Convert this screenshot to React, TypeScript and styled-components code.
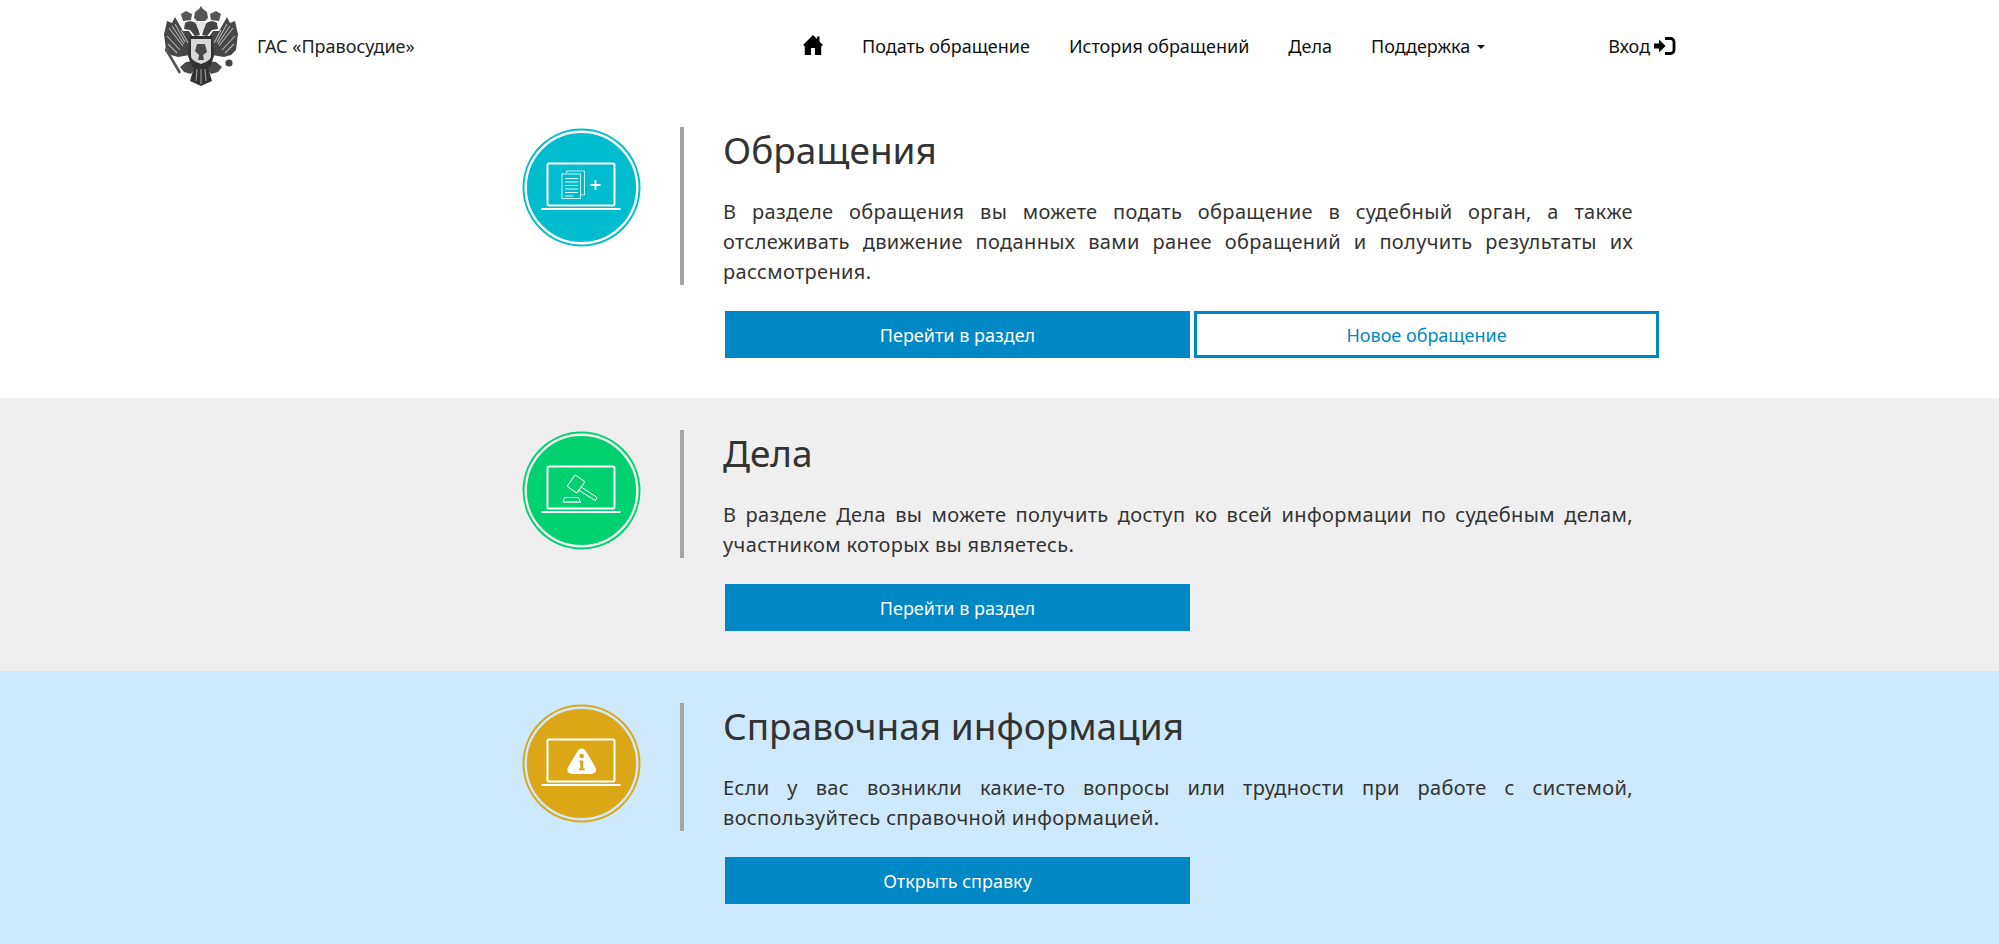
import styled, { createGlobalStyle } from "styled-components";

const GlobalStyle = createGlobalStyle`
  html, body {
    margin: 0;
    padding: 0;
    background: #fff;
  }
  body {
    font-family: "Noto Sans", "Open Sans", sans-serif;
    color: #333;
  }
`;

const Header = styled.header`
  height: 95px;
  display: flex;
  align-items: flex-start;
  padding-left: 164px;
  background: #fff;
`;
const Brand = styled.a`
  display: flex;
  align-items: center;
  gap: 19px;
  width: 639px;
  height: 91px;
  font-size: 18px;
  color: #222;
`;
const Nav = styled.nav`
  display: flex;
  align-items: center;
  gap: 39px;
  height: 91px;
  font-size: 18px;
  color: #111;
`;
const NavLink = styled.a`
  display: flex;
  align-items: center;
  gap: 7px;
  color: #111;
  white-space: nowrap;
`;
const HomeLink = styled(NavLink)`
  margin-top: -1px;
`;
const Caret = styled.span`
  width: 0;
  height: 0;
  border-left: 4px solid transparent;
  border-right: 4px solid transparent;
  border-top: 4px solid #111;
  margin-top: 3px;
`;
const Login = styled(NavLink)`
  margin-left: 84px;
  gap: 4px;
`;
const Section = styled.section<{ $bg: string }>`
  background: ${(p) => p.$bg};
  padding: 32px 0 40px 522px;
`;
const Row = styled.div`
  display: flex;
  align-items: flex-start;
`;
const IconWrap = styled.div`
  width: 158px;
  flex: none;
  padding-top: 1px;
`;
const Body = styled.div`
  border-left: 4px solid #a5a5a5;
  padding-left: 39px;
  width: 910px;
`;
const Title = styled.h2`
  margin: 0;
  height: 70px;
  font-size: 37px;
  line-height: 44px;
  padding-top: 1px;
  box-sizing: border-box;
  font-weight: 400;
  color: #333;
`;
const Text = styled.p`
  margin: 0 0 -2px;
  font-size: 20px;
  line-height: 30px;
  letter-spacing: 0.35px;
  text-align: justify;
  color: #333;
`;
const Buttons = styled.div`
  display: flex;
  gap: 4px;
  margin: 26px 0 0 203px;
`;
const Button = styled.a<{ $outline?: boolean }>`
  width: 465px;
  height: 47px;
  box-sizing: border-box;
  display: flex;
  align-items: center;
  justify-content: center;
  font-size: 18px;
  border: 3px solid #0087c6;
  background: ${(p) => (p.$outline ? "#fff" : "#0087c6")};
  color: ${(p) => (p.$outline ? "#0087c6" : "#fff")};
`;

function HomeIcon() {
  return (
    <svg width="20" height="20" viewBox="0 0 20 20">
      <path d="M10 0l4 4V1.500h2.500v5L20 10l-1.800 1.300V20H12v-7H8v7H1.800v-8.700L0 10z" fill="#000" />
    </svg>
  );
}

function LoginIcon() {
  return (
    <svg width="22" height="18" viewBox="0 0 22 18">
      <path d="M0 6.500h5V2.500L11.500 9 5 15.500v-4H0z" fill="#000" />
      <path d="M11 1.500h5.500a3.500 3.500 0 0 1 3.500 3.500v8a3.500 3.500 0 0 1-3.500 3.500H11" fill="none" stroke="#000" strokeWidth="2.800" />
    </svg>
  );
}

function EagleHalf() {
  return (
    <g>
      {/* wing */}
      <path d="M11 11 8 17 3 15 1 24 0 28l1 8 1 8 5 5 7 2 12-2 4-8-1-10-4-6-6 0z" fill="#464646" />
      <path d="M5 22l14 18M3 30l13 14M4 38l9 9M8 20l12 18M11 18l10 18M17 24l7 13" stroke="#b5b5b5" strokeWidth="1.100" fill="none" />
      {/* head and side crown */}
      <path d="M17 8l5-3 6 3-1 6-8 1z" fill="#555" />
      <path d="M21 17c4-3 10-2 12 2l3 10-5 1-5-6-6-1z" fill="#444" />
      {/* leg and claw */}
      <path d="M22 56l8-1 2 6-5 7-7-2-4-5z" fill="#4a4a4a" />
    </g>
  );
}

function Emblem() {
  return (
    <svg width="74" height="80" viewBox="0 0 74 80">
      <defs>
        <filter id="soft">
          <feGaussianBlur stdDeviation="0.55" />
        </filter>
      </defs>
      <g filter="url(#soft)">
        <EagleHalf />
        <g transform="translate(74 0) scale(-1 1)">
          <EagleHalf />
        </g>
        {/* centre crown */}
        <path d="M37 0l2 3 4 3 1 6-3 3h-8l-3-3 1-6 4-3z" fill="#555" />
        <path d="M32 16h10l-1 5-4 6-4-6z" fill="#e6e6e6" />
        {/* body and shield */}
        <path d="M26 30h22l2 20-4 11H28l-4-11z" fill="#333" />
        <path d="M27 33h20v17c0 4-5 6-10 8-5-2-10-4-10-8z" fill="#d8d8d8" />
        <path d="M33 38h8l2 8-4 3 1 5h-6l1-5-4-4z" fill="#4a4a4a" />
        {/* sceptre and orb */}
        <path d="M3 45l13 22" stroke="#555" strokeWidth="2.600" />
        <circle cx="3" cy="44" r="2.200" fill="#555" />
        <circle cx="65" cy="57" r="3.600" fill="#444" />
        {/* tail */}
        <path d="M30 61h14l4 14-11 5-11-5z" fill="#333" />
        <path d="M33 63l-1 12M37 63v15M41 63l1 12" stroke="#b5b5b5" strokeWidth="0.900" />
      </g>
    </svg>
  );
}

function IconBase({ color, bg, children }: { color: string; bg: string; children: React.ReactNode }) {
  return (
    <svg width="120" height="120" viewBox="0 0 120 120" fill="none">
      <circle cx="59.500" cy="59.500" r="59" fill={color} />
      <circle cx="59.500" cy="59.500" r="55.800" stroke={bg} strokeWidth="2.400" />
      <rect x="25.500" y="35.500" width="67" height="42" rx="1.500" stroke="#fff" strokeWidth="2" />
      <path d="M19.500 81h79" stroke="#fff" strokeWidth="1.800" />
      {children}
    </svg>
  );
}

function DocsIcon() {
  return (
    <IconBase color="#00bccf" bg="#fff">
      <g stroke="#fff" strokeOpacity="0.85" strokeWidth="0.900">
        <path d="M44.500 45v-2h18v24h-4" />
        <rect x="40" y="46" width="18.500" height="24.500" />
        <path d="M43 50.500h13M43 54h13M43 57.500h13M43 61h13M43 64.500h13M43 68h8" strokeWidth="1" />
      </g>
      <path d="M73.500 52v10M68.500 57h10" stroke="#fff" strokeWidth="1.800" />
    </IconBase>
  );
}

function GavelIcon() {
  return (
    <IconBase color="#00d170" bg="#efefef">
      <g stroke="#fff" strokeWidth="1" strokeLinejoin="round">
        <rect x="-6" y="-7" width="12" height="14" rx="1.500" transform="translate(54 53) rotate(35)" />
        <path d="M58.500 55.500 75 66.500l-1.500 3.200L56.500 59" />
        <path d="M41 71l1.500-4.500h14L58.500 71zM41 71h18" />
      </g>
    </IconBase>
  );
}

function InfoIcon() {
  return (
    <IconBase color="#dba716" bg="#cee9fb">
      <path d="M59.700 44.500c2 0 3.200 1.200 4.500 3.300l8.800 14.600c2.500 4 .6 7.600-3.800 7.600H50.300c-4.400 0-6.300-3.600-3.800-7.600l8.700-14.600c1.300-2.100 2.500-3.300 4.500-3.300z" fill="#fff" />
      <circle cx="59.700" cy="52" r="2.300" fill="#dba716" />
      <path d="M57.300 56.500h3.900v8h1.500v1.800h-5.700v-1.800h1.300v-6.200h-1z" fill="#dba716" />
    </IconBase>
  );
}

export default function App() {
  return (
    <>
      <GlobalStyle />
      <Header>
        <Brand>
          <Emblem />
          ГАС «Правосудие»
        </Brand>
        <Nav>
          <HomeLink>
            <HomeIcon />
          </HomeLink>
          <NavLink>Подать обращение</NavLink>
          <NavLink>История обращений</NavLink>
          <NavLink>Дела</NavLink>
          <NavLink>
            Поддержка <Caret />
          </NavLink>
          <Login>
            Вход <LoginIcon />
          </Login>
        </Nav>
      </Header>
      <Section $bg="#fff">
        <Row>
          <IconWrap>
            <DocsIcon />
          </IconWrap>
          <Body>
            <Title>Обращения</Title>
            <Text>
              В разделе обращения вы можете подать обращение в судебный орган, а также отслеживать движение поданных вами
              ранее обращений и получить результаты их рассмотрения.
            </Text>
          </Body>
        </Row>
        <Buttons>
          <Button>Перейти в раздел</Button>
          <Button $outline>Новое обращение</Button>
        </Buttons>
      </Section>
      <Section $bg="#efefef">
        <Row>
          <IconWrap>
            <GavelIcon />
          </IconWrap>
          <Body>
            <Title>Дела</Title>
            <Text>
              В разделе Дела вы можете получить доступ ко всей информации по судебным делам, участником которых вы
              являетесь.
            </Text>
          </Body>
        </Row>
        <Buttons>
          <Button>Перейти в раздел</Button>
        </Buttons>
      </Section>
      <Section $bg="#cee9fb">
        <Row>
          <IconWrap>
            <InfoIcon />
          </IconWrap>
          <Body>
            <Title>Справочная информация</Title>
            <Text>
              Если у вас возникли какие-то вопросы или трудности при работе с системой, воспользуйтесь справочной
              информацией.
            </Text>
          </Body>
        </Row>
        <Buttons>
          <Button>Открыть справку</Button>
        </Buttons>
      </Section>
    </>
  );
}
